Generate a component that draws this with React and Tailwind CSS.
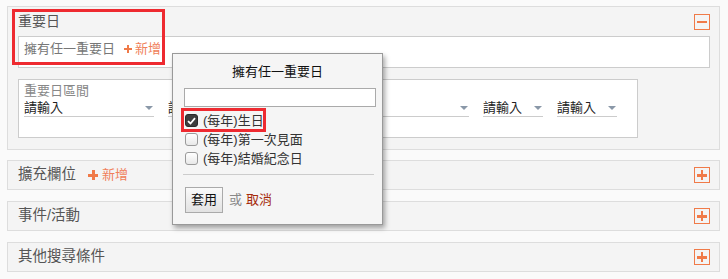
import { useState } from 'react';

function OrangeToggle({ open }) {
  return (
    <button className="w-[16px] h-[16px] border-[1.5px] border-[#f07a48] flex items-center justify-center bg-transparent">
      <span className="relative block w-[10px] h-[10px]">
        <span className="absolute left-0 top-[4px] w-[10px] h-[2.5px] bg-[#f07a48]"></span>
        {!open && <span className="absolute top-0 left-[3.75px] w-[2.5px] h-[10px] bg-[#f07a48]"></span>}
      </span>
    </button>
  );
}

function PlusGlyph({ size = 'sm' }) {
  const big = size === 'lg';
  return (
    <span className={`relative inline-block ${big ? 'w-[10px] h-[10px]' : 'w-[8px] h-[8px]'}`}>
      <span className={`absolute left-0 w-full bg-[#f07a48] ${big ? 'top-[3.5px] h-[3px]' : 'top-[3px] h-[2px]'}`}></span>
      <span className={`absolute top-0 h-full bg-[#f07a48] ${big ? 'left-[3.5px] w-[3px]' : 'left-[3px] w-[2px]'}`}></span>
    </span>
  );
}

function Select({ w }) {
  return (
    <div className={`${w} h-[17px] border-b border-[#cccccc] flex items-center justify-between text-[13px] leading-[16px] text-[#222]`}>
      <span>請輸入</span>
      <span className="w-0 h-0 border-l-[4px] border-r-[4px] border-t-[4px] border-l-transparent border-r-transparent border-t-[#8a98a8] mr-[1px]"></span>
    </div>
  );
}

function Collapsed({ title, add }) {
  return (
    <div className="h-[30px] border border-[#dddddd] bg-[#f4f4f4] flex items-center justify-between pl-[10px] pr-[9px]">
      <div className="flex items-center text-[14.5px] text-[#555]">
        <span>{title}</span>
        {add && (
          <span className="ml-[12px] flex items-center text-[#f07f5a] text-[13px]">
            <PlusGlyph size="lg" />
            <span className="ml-[4px]">新增</span>
          </span>
        )}
      </div>
      <OrangeToggle open={false} />
    </div>
  );
}

function Checkbox({ checked }) {
  if (checked) {
    return (
      <span className="w-[13px] h-[13px] rounded-[3px] bg-[#3d3d3d] border border-[#2a2a2a] flex items-center justify-center">
        <svg width="9" height="8" viewBox="0 0 9 8">
          <path d="M1 4.2 L3.5 6.5 L8 1.2" fill="none" stroke="#fff" strokeWidth="1.8" />
        </svg>
      </span>
    );
  }
  return <span className="w-[13px] h-[13px] rounded-[3px] border border-[#9a9a9a] bg-gradient-to-b from-[#ffffff] to-[#e8e8e8]"></span>;
}

export default function App() {
  const [items] = useState([
    { label: '生日', checked: true },
    { label: '第一次見面', checked: false },
    { label: '結婚紀念日', checked: false },
  ]);

  return (
    <div className="relative w-[728px] h-[279px] overflow-hidden bg-[#fafafa] pt-[6px] pl-[7px] pr-[8px] font-['Liberation_Sans','Noto_Sans_CJK_TC',sans-serif]">
      {/* 重要日 panel */}
      <div className="h-[144px] border border-[#dddddd] bg-[#f4f4f4] pl-[10px] pr-[9px]">
        <div className="h-[29px] flex items-center justify-between">
          <span className="text-[14px] text-[#555]">重要日</span>
          <OrangeToggle open={true} />
        </div>
        <div className="h-[32px] border border-[#cccccc] bg-white pl-[5px] pt-[3px] flex items-start text-[13px] leading-[18px]">
          <span className="text-[#777]">擁有任一重要日</span>
          <span className="ml-[9px] flex items-center text-[#f07f5a]">
            <PlusGlyph />
            <span className="ml-[3px]">新增</span>
          </span>
        </div>
        <div className="mt-[11px] w-[620px] h-[59px] border border-[#cccccc] bg-white pl-[5px] pt-[2px]">
          <div className="text-[13px] leading-[18px] text-[#888]">重要日區間</div>
          <div className="flex items-end gap-[14px]">
            <Select w="w-[130px]" />
            <Select w="w-[130px]" />
            <div className="ml-[27px]">
              <Select w="w-[130px]" />
            </div>
            <Select w="w-[60px]" />
            <Select w="w-[60px]" />
          </div>
        </div>
      </div>

      <div className="mt-[10px] flex flex-col gap-[11px]">
        <Collapsed title="擴充欄位" add />
        <Collapsed title="事件/活動" />
        <Collapsed title="其他搜尋條件" />
      </div>

      {/* highlight around 重要日 */}
      <div className="absolute left-[12px] top-[9px] w-[153px] h-[56px] border-[3px] border-[#ee2a30] pointer-events-none"></div>

      {/* popup */}
      <div className="absolute left-[172px] top-[53px] w-[211px] h-[172px] border border-[#999] bg-[#f5f5f5] shadow-[2px_3px_5px_rgba(0,0,0,0.35)] text-[13px] text-[#222]">
        <div className="pt-[9px] leading-[18px] text-center text-[#111]">擁有任一重要日</div>
        <div className="mt-[7px] ml-[11px] w-[192px] h-[19px] border border-[#aaa] bg-white"></div>
        <div className="mt-[4px] ml-[12px] flex flex-col">
          {items.map((it) => (
            <div key={it.label} className="relative h-[19px] flex items-center">
              <Checkbox checked={it.checked} />
              <span className="ml-[5px] leading-[18px] text-[#333]">(每年){it.label}</span>
              {it.checked && (
                <span className="absolute left-[-4px] top-[-3px] w-[85px] h-[24px] border-[3px] border-[#ee2a30]"></span>
              )}
            </div>
          ))}
        </div>
        <div className="mt-[6px] ml-[10px] w-[191px] h-px bg-[#cccccc]"></div>
        <div className="mt-[12px] ml-[12px] flex items-center">
          <button className="w-[38px] h-[26px] border border-[#aaa] bg-gradient-to-b from-[#fafafa] to-[#e2e2e2] text-[13px] text-[#111]">套用</button>
          <span className="ml-[6px] text-[#888]">或</span>
          <span className="ml-[4px] text-[#a52a0a]">取消</span>
        </div>
      </div>
    </div>
  );
}
